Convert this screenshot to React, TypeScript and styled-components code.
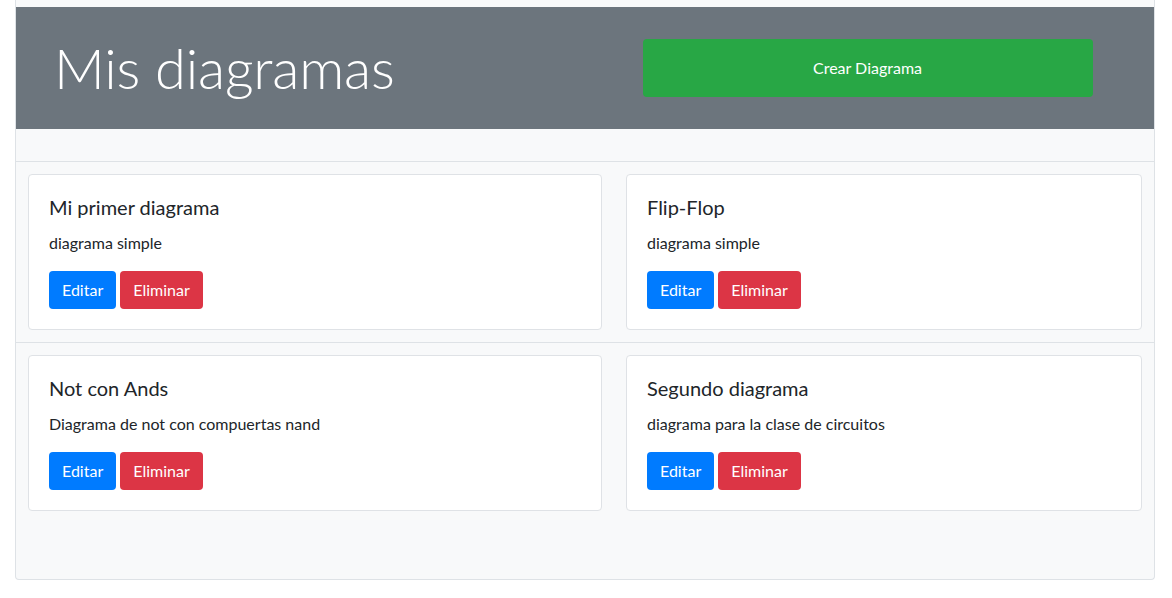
import React from 'react'
import styled, { createGlobalStyle } from 'styled-components'

const GlobalStyle = createGlobalStyle`
  body {
    margin: 0;
    background: #ffffff;
    font-family: Lato, "Open Sans", "Liberation Sans", sans-serif;
    color: #212529;
  }
`

const Page = styled.div`
  width: 1138px;
  margin: 0 auto 0 15px;
  padding-top: 7px;
  padding-bottom: 56px;
  background: #f8f9fa;
  border: 1px solid #dee2e6;
  border-top: none;
  border-radius: 0 0 4px 4px;
`

const Header = styled.div`
  display: grid;
  grid-template-columns: 1fr 1fr;
  align-items: center;
  height: 122px;
  background: #6c757d;
`

const Title = styled.h1`
  margin: 0;
  padding-left: 38px;
  color: #ffffff;
  font-size: 56px;
  font-weight: 300;
  line-height: 1.2;
  letter-spacing: -0.2px;
`

const HeaderAction = styled.div`
  display: flex;
  justify-content: center;
  padding-right: 4px;
`

const CreateButton = styled.button`
  width: 450px;
  height: 58px;
  padding-bottom: 3px;
  border: none;
  border-radius: 4px;
  background: #28a745;
  color: #ffffff;
  font-family: inherit;
  font-size: 16px;
  cursor: pointer;
`

const Spacer = styled.div`
  height: 32px;
`

const Row = styled.div`
  display: grid;
  grid-template-columns: 574px 516px;
  column-gap: 24px;
  padding: 12px 13px 12px 12px;
  border-top: 1px solid #dee2e6;
`

const Card = styled.div`
  background: #ffffff;
  border: 1px solid #dfe2e6;
  border-radius: 4px;
  padding: 20px;
`

const CardTitle = styled.h5`
  margin: 0 0 12px;
  font-size: 20px;
  font-weight: 400;
  line-height: 1.2;
`

const CardText = styled.p`
  margin: 0 0 16px;
  font-size: 16px;
  line-height: 24px;
`

const Actions = styled.div`
  display: flex;
  gap: 4px;
`

const Button = styled.button<{ $variant: 'primary' | 'danger' }>`
  height: 38px;
  padding: 0 13px 2px;
  border: none;
  border-radius: 4px;
  background: ${({ $variant }) => ($variant === 'primary' ? '#007bff' : '#dc3545')};
  color: #ffffff;
  font-family: inherit;
  font-size: 16px;
  cursor: pointer;
`

const diagrams = [
  { name: 'Mi primer diagrama', description: 'diagrama simple' },
  { name: 'Flip-Flop', description: 'diagrama simple' },
  { name: 'Not con Ands', description: 'Diagrama de not con compuertas nand' },
  { name: 'Segundo diagrama', description: 'diagrama para la clase de circuitos' },
]

const rows = [diagrams.slice(0, 2), diagrams.slice(2, 4)]

const App = () => (
  <>
    <GlobalStyle />
    <Page>
      <Header>
        <Title>Mis diagramas</Title>
        <HeaderAction>
          <CreateButton>Crear Diagrama</CreateButton>
        </HeaderAction>
      </Header>
      <Spacer />
      {rows.map((row, i) => (
        <Row key={i}>
          {row.map((d) => (
            <Card key={d.name}>
              <CardTitle>{d.name}</CardTitle>
              <CardText>{d.description}</CardText>
              <Actions>
                <Button $variant="primary">Editar</Button>
                <Button $variant="danger">Eliminar</Button>
              </Actions>
            </Card>
          ))}
        </Row>
      ))}
    </Page>
  </>
)

export default App
